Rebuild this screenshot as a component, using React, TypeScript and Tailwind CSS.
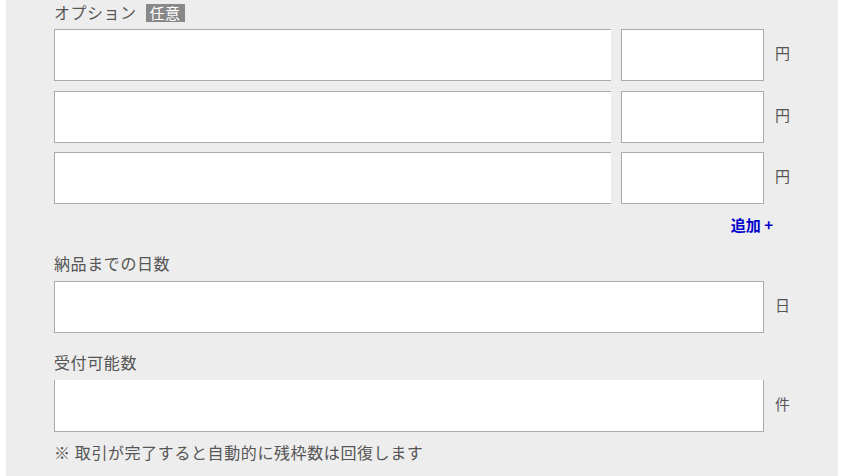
import React from "react";

const font = { fontFamily: '"Noto Sans CJK JP", "Noto Sans", sans-serif' };

function Unit({ children }: { children: React.ReactNode }) {
  return (
    <div className="mb-[5px] w-[26px] pl-[11px] text-[15px] leading-[20px] text-[#555]">{children}</div>
  );
}

export default function App() {
  return (
    <div className="w-[841px] h-[476px] bg-white overflow-hidden" style={font}>
      <div className="ml-[6px] w-[832px] h-[476px] bg-[#ededed] pl-[48px] pt-[4px] text-[#555]">
        <div className="flex h-[18px] items-center">
          <span className="text-[16px] leading-[18px] tracking-[0.5px] -mt-[2px]">オプション</span>
          <span className="ml-[9px] bg-[#888] px-[4px] text-[15px] leading-[18px] tracking-[0.5px] text-white">任意</span>
        </div>

        <div className="mt-[7px] flex h-[52px] items-center">
          <div className="h-full w-[557px] border border-r-0 border-[#aaa] bg-white" />
          <div className="ml-[10px] h-full w-[143px] border border-[#aaa] bg-white" />
          <Unit>円</Unit>
        </div>
        <div className="mt-[10px] flex h-[52px] items-center">
          <div className="h-full w-[557px] border border-r-0 border-[#aaa] bg-white" />
          <div className="ml-[10px] h-full w-[143px] border border-[#aaa] bg-white" />
          <Unit>円</Unit>
        </div>
        <div className="mt-[9px] flex h-[52px] items-center">
          <div className="h-full w-[557px] border border-r-0 border-[#aaa] bg-white" />
          <div className="ml-[10px] h-full w-[143px] border border-[#aaa] bg-white" />
          <Unit>円</Unit>
        </div>

        <div className="mt-[11px] flex h-[20px] w-[719px] justify-end">
          <span className="text-[15px] font-bold leading-[20px] text-[#0000cc]">追加 +</span>
        </div>

        <div className="mt-[18px] h-[20px] text-[16px] leading-[20px] tracking-[0.6px]">納品までの日数</div>
        <div className="mt-[8px] flex h-[52px] items-center">
          <div className="h-full w-[710px] border border-[#aaa] bg-white" />
          <Unit>日</Unit>
        </div>

        <div className="mt-[19px] h-[20px] text-[16px] leading-[20px] tracking-[0.6px]">受付可能数</div>
        <div className="mt-[8px] flex h-[52px] items-center">
          <div className="h-full w-[710px] border border-t-0 border-[#aaa] bg-white" />
          <Unit>件</Unit>
        </div>

        <div className="mt-[10px] h-[20px] text-[16px] leading-[20px] tracking-[0.6px]">※ 取引が完了すると自動的に残枠数は回復します</div>
      </div>
    </div>
  );
}
